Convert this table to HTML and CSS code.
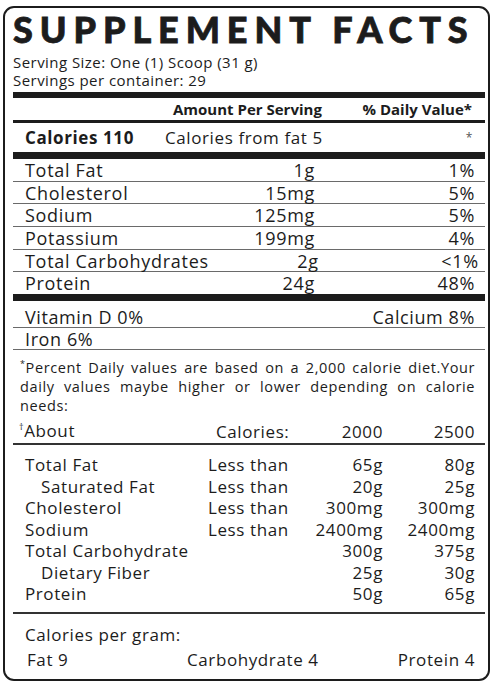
FILE: index.html
```html
<!DOCTYPE html>
<html lang="en">
<head>
    <meta charset="UTF-8">
    <meta name="viewport" content="width=device-width, initial-scale=1.0">
    <title>Supplement Facts</title>

    <link rel="stylesheet" href="styles.css">

</head>
<body>
    <div class="label">
        <h1 class="title">SUPPLEMENT FACTS</h1>
        <p class="serving">Serving Size: One (1) Scoop (31 g)</p>
        <p class="serving">Servings per container: 29</p>

        <div class="bar bar-thick bar-top"></div>
        <div class="head-row">
            <span class="amount">Amount Per Serving</span>
            <span class="dv">% Daily Value*</span>
        </div>
        <div class="bar bar-mid"></div>

        <div class="calories-row">
            <span class="cal-main">Calories 110</span>
            <span class="cal-fat">Calories from fat 5</span>
            <span class="cal-star">*</span>
        </div>
        <div class="bar bar-thick"></div>

        <div class="nutrients">
            <div class="n-row"><span>Total Fat</span><span class="qty">1g</span><span class="pct">1%</span></div>
            <div class="n-row"><span>Cholesterol</span><span class="qty">15mg</span><span class="pct">5%</span></div>
            <div class="n-row"><span>Sodium</span><span class="qty">125mg</span><span class="pct">5%</span></div>
            <div class="n-row"><span>Potassium</span><span class="qty">199mg</span><span class="pct">4%</span></div>
            <div class="n-row"><span>Total Carbohydrates</span><span class="qty">2g</span><span class="pct">&lt;1%</span></div>
            <div class="n-row"><span>Protein</span><span class="qty">24g</span><span class="pct">48%</span></div>
        </div>
        <div class="bar bar-thick"></div>

        <div class="vit-row">
            <span>Vitamin D 0%</span>
            <span>Calcium 8%</span>
        </div>
        <div class="vit-row">
            <span>Iron 6%</span>
        </div>

        <p class="footnote"><sup>*</sup>Percent Daily values are based on a 2,000 calorie diet.Your daily values maybe higher or lower depending on calorie needs:</p>

        <div class="about-row">
            <span class="about"><sup>†</sup>About</span>
            <span class="c2">Calories:</span>
            <span class="c3">2000</span>
            <span class="c4">2500</span>
        </div>

        <div class="dv-table">
            <div class="dv-row"><span>Total Fat</span><span class="c2">Less than</span><span class="c3">65g</span><span class="c4">80g</span></div>
            <div class="dv-row"><span class="sub">Saturated Fat</span><span class="c2">Less than</span><span class="c3">20g</span><span class="c4">25g</span></div>
            <div class="dv-row"><span>Cholesterol</span><span class="c2">Less than</span><span class="c3">300mg</span><span class="c4">300mg</span></div>
            <div class="dv-row"><span>Sodium</span><span class="c2">Less than</span><span class="c3">2400mg</span><span class="c4">2400mg</span></div>
            <div class="dv-row"><span>Total Carbohydrate</span><span class="c2"></span><span class="c3">300g</span><span class="c4">375g</span></div>
            <div class="dv-row"><span class="sub">Dietary Fiber</span><span class="c2"></span><span class="c3">25g</span><span class="c4">30g</span></div>
            <div class="dv-row"><span>Protein</span><span class="c2"></span><span class="c3">50g</span><span class="c4">65g</span></div>
        </div>

        <div class="per-gram">
            <p class="per-gram-title">Calories per gram:</p>
            <div class="per-gram-row">
                <span>Fat 9</span>
                <span>Carbohydrate 4</span>
                <span>Protein 4</span>
            </div>
        </div>
    </div>
</body>
</html>
```

FILE: styles.css
```css
body{
    margin:0;
    padding:0;
    box-sizing: border-box;
    background-color: white;
    color: #1c1c1c;
    font-family: "Open Sans", "Liberation Sans", sans-serif;
}

.label{
    width: 472px;
    margin: 6px 0 0 3px;
    padding: 0 3px 0 8px;
    border: 2px solid #1c1c1c;
    border-radius: 11px;
}

.title{
    margin: 0;
    font-family: "Lato", sans-serif;
    font-weight: 900;
    font-size: 36px;
    line-height: 43px;
    letter-spacing: 6.9px;
    -webkit-text-stroke: 0.8px #1c1c1c;
    white-space: nowrap;
}

.serving{
    margin: 0;
    font-size: 15px;
    line-height: 18px;
    letter-spacing: 0.45px;
    white-space: nowrap;
}

.serving:first-of-type{
    padding-top: 2px;
}

.bar{
    background-color: #1c1c1c;
}

.bar-thick{
    height: 7px;
}

.bar-mid{
    height: 3px;
}

.bar-top{
    margin-top: 3px;
    height: 6px;
}

.head-row{
    display: flex;
    font-weight: 700;
    font-size: 15px;
    line-height: 22px;
    padding-right: 13px;
}

.head-row .amount{
    margin-left: 160px;
}

.head-row .dv{
    margin-left: auto;
}

.calories-row{
    display: flex;
    align-items: center;
    height: 29px;
    padding: 0 12px 0 12px;
    font-size: 17px;
    letter-spacing: 0.6px;
}

.cal-main{
    font-weight: 700;
    width: 140px;
}

.cal-fat{
    flex: 1;
}

.cal-star{
    font-size: 12px;
    color: #555;
}

.n-row{
    display: grid;
    grid-template-columns: 1fr 110px 160px;
    height: 21.7px;
    line-height: 23px;
    padding: 0 10px 0 12px;
    font-size: 18px;
    letter-spacing: 0.7px;
    white-space: nowrap;
    border-bottom: 1px solid #6a6a6a;
}

.n-row:last-child{
    border-bottom: none;
}

.n-row .qty,
.n-row .pct{
    text-align: right;
}

.vit-row{
    display: flex;
    justify-content: space-between;
    height: 23px;
    line-height: 26px;
    padding: 3px 10px 0 12px;
    font-size: 18px;
    letter-spacing: 0.6px;
    border-bottom: 1.5px solid #6a6a6a;
}

.vit-row + .vit-row{
    height: 21px;
    padding-top: 0;
    line-height: 22px;
}

.footnote{
    margin: 0;
    padding: 8px 10px 0 7px;
    font-size: 14.5px;
    line-height: 19px;
    letter-spacing: 0.6px;
    text-align: justify;
}

.footnote sup,
.about sup{
    font-size: 9px;
    line-height: 0;
}

.about-row,
.dv-row{
    display: grid;
    grid-template-columns: 183px 95px 80px 92px;
    padding: 0 10px 0 12px;
    font-size: 17px;
    letter-spacing: 0.6px;
}

.about-row{
    height: 28px;
    align-items: end;
    border-bottom: 2px solid #333;
}

.about-row .c2{
    padding-left: 8px;
}

.about-row .about{
    margin-left: -6px;
    align-self: center;
    padding-top: 2px;
}

.c3,
.c4{
    text-align: right;
}

.dv-table{
    padding: 9px 0 7px;
    border-bottom: 2px solid #333;
}

.dv-row{
    line-height: 21.5px;
}

.dv-row .sub{
    padding-left: 16px;
}

.per-gram{
    padding: 10px 10px 5px 12px;
    font-size: 17px;
    letter-spacing: 0.6px;
}

.per-gram-title{
    margin: 0;
    line-height: 22px;
}

.per-gram-row{
    display: grid;
    grid-template-columns: 160px 1fr auto;
    line-height: 28px;
    padding-left: 2px;
}
```
